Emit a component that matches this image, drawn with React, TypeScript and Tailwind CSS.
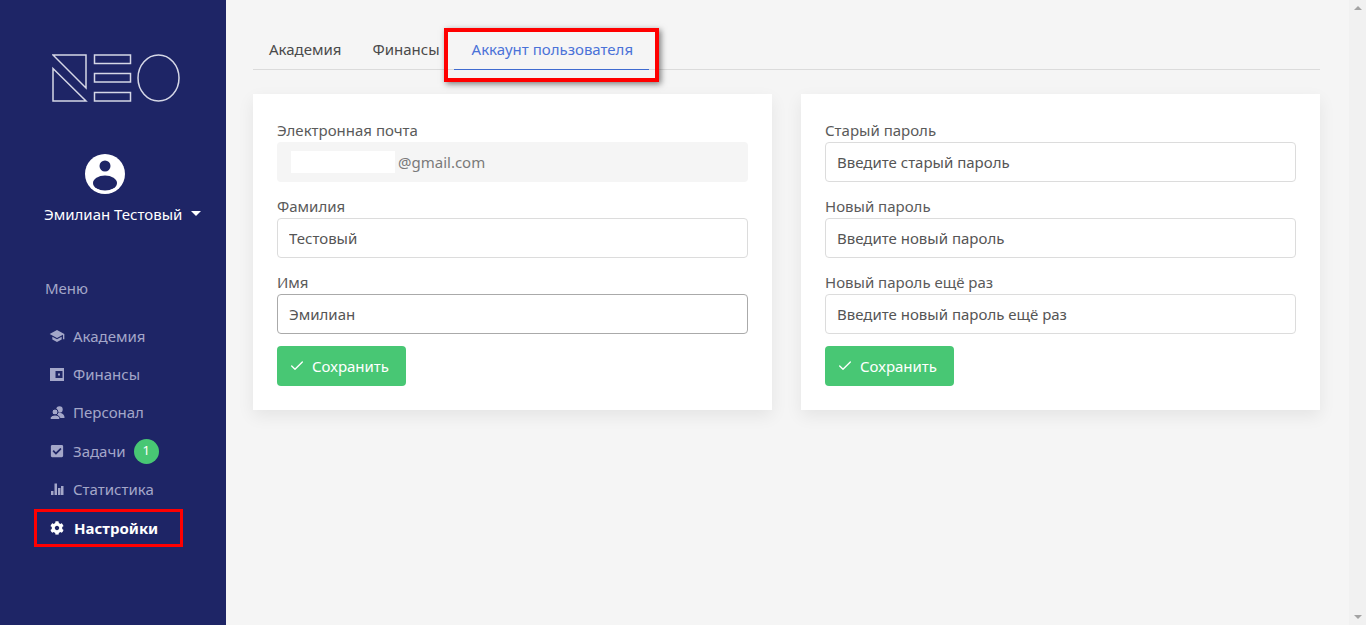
import React from 'react';
import { FaCheckSquare, FaCog } from 'react-icons/fa';
import { MdSchool } from 'react-icons/md';
import { Check } from 'lucide-react';

const menu = [
  { label: 'Академия', icon: <MdSchool className="w-[16px] h-[16px] ml-[-1px]" /> },
  { label: 'Финансы', icon: <WalletIcon /> },
  { label: 'Персонал', icon: <PeopleIcon /> },
  { label: 'Задачи', icon: <FaCheckSquare className="w-[14px] h-[14px]" />, badge: '1' },
  { label: 'Статистика', icon: <StatsIcon /> },
];

function WalletIcon() {
  return (
    <svg viewBox="0 0 14 13" className="w-[14px] h-[13px]" fill="currentColor">
      <path fillRule="evenodd" d="M0 0h14v13H0zM5.500 3v7h7V3zM8 5.500h2v2H8z" />
    </svg>
  );
}

function PeopleIcon() {
  return (
    <svg viewBox="0 0 15 14" className="w-[15px] h-[14px]">
      <circle cx="9.500" cy="3.500" r="3.200" fill="currentColor" />
      <path d="M4.500 12c0-3.500 2-5 5-5s5 1.500 5 5z" fill="currentColor" />
      <circle cx="5" cy="6" r="3" fill="currentColor" stroke="#1e2566" strokeWidth="1" />
      <path d="M0 13.500c0-3 2-4.500 5-4.500s5 1.500 5 4.500z" fill="currentColor" stroke="#1e2566" strokeWidth="1" />
    </svg>
  );
}

function StatsIcon() {
  return (
    <svg viewBox="0 0 14 14" className="w-[14px] h-[14px]" fill="currentColor">
      <path d="M1 9h2.500v4H1zM4.500 1.500H7V13H4.500zM8 6h2.500v7H8zM11 4h2.500v9H11z" />
    </svg>
  );
}

function AvatarIcon() {
  return (
    <svg viewBox="0 0 40 40" className="w-[40px] h-[40px]">
      <circle cx="20" cy="20" r="20" fill="#ffffff" />
      <circle cx="20" cy="12" r="5.500" fill="#1e2566" />
      <ellipse cx="20" cy="29" rx="12" ry="7.500" fill="#1e2566" />
    </svg>
  );
}

function NeoLogo() {
  return (
    <svg viewBox="0 0 128 48" className="w-[128px] h-[48px]" fill="none" stroke="#d5d7e6" strokeWidth="1.500">
      <path d="M1 1h33v33z" />
      <path d="M1 14.500v32.500h33z" />
      <rect x="42.500" y="1" width="36" height="8.500" />
      <rect x="42.500" y="19.500" width="36" height="8.500" />
      <rect x="42.500" y="38.500" width="36" height="8.500" />
      <ellipse cx="106.500" cy="24" rx="20.500" ry="23" />
    </svg>
  );
}

function Field({ label, value, focused }: { label: string; value: string; focused?: boolean }) {
  return (
    <div>
      <div className="text-[15px] leading-[22px] text-[#5a5a5a]">{label}</div>
      <input
        readOnly
        value={value}
        className={`mt-[1px] block w-full h-10 pl-[11px] pr-3 bg-white rounded border text-[15px] text-[#555555] outline-none ${
          focused ? 'border-[#aaaaaa]' : 'border-[#dcdcdc]'
        }`}
      />
    </div>
  );
}

function SaveButton() {
  return (
    <button className="mt-3 flex items-center gap-[7px] h-10 w-[129px] pl-[12px] rounded bg-[#48c774] text-white text-[15px]">
      <Check className="w-[16px] h-[16px]" strokeWidth={2} />
      Сохранить
    </button>
  );
}

export default function App() {
  return (
    <div className="flex h-[625px] overflow-hidden bg-[#f5f5f5] font-['Noto_Sans','Open_Sans',sans-serif]">
      <aside className="w-[226px] shrink-0 bg-[#1e2566] text-white">
        <div className="pt-[54px] pl-[52px]">
          <NeoLogo />
        </div>
        <div className="mt-[52px]">
          <div className="pl-[85px]">
            <AvatarIcon />
          </div>
          <div className="mt-[9px] pl-[44px] flex items-center gap-[9px] text-[15px] leading-[22px]">
            Эмилиан Тестовый
            <span className="mt-[-2px] border-x-[5px] border-t-[5px] border-x-transparent border-t-white" />
          </div>
        </div>
        <div className="mt-[52px] pl-[45px] text-[15px] leading-[22px] text-[#a4a7c9]">Меню</div>
        <nav className="mt-[18px]">
          {menu.map((item) => (
            <div key={item.label} className="flex items-center h-[38.300px] pl-[50px] text-[15px] text-[#a4a7c9]">
              <span className="w-[23px] shrink-0">{item.icon}</span>
              {item.label}
              {item.badge && (
                <span className="ml-[8px] flex items-center justify-center w-[25px] h-[25px] rounded-full bg-[#48c774] text-white text-[13px]">
                  {item.badge}
                </span>
              )}
            </div>
          ))}
          <div className="relative mt-[1px] flex items-center h-[38px] pl-[50px] text-[15px] font-bold text-white">
            <span className="w-[24px] shrink-0">
              <FaCog className="w-[14px] h-[14px]" />
            </span>
            Настройки
            <span className="absolute left-[34px] top-0 w-[149px] h-[38px] border-[3px] border-[#ff0000]" />
          </div>
        </nav>
      </aside>

      <main className="flex-1 min-w-0 pl-[27px] pr-[29px]">
        <div className="mt-[30px] h-[40px] flex border-b border-[#dbdbdb] text-[15px]">
          <div className="px-4 pt-[8px] text-[#4a4a4a]">Академия</div>
          <div className="pt-[8px] text-[#4a4a4a] ml-[15px]">Финансы</div>
          <div className="relative ml-[14px] w-[195px] h-[40px] pl-[18px] pt-[8px] text-[#4a72d8] border-b border-[#3f6bd0]">
            Аккаунт пользователя
            <span className="absolute left-[-10px] top-[-2px] w-[215px] h-[54px] border-[4px] border-[#ff0000] shadow-[2px_2px_6px_rgba(0,0,0,0.5)]" />
          </div>
        </div>
        <div className="mt-[24px] grid grid-cols-2 gap-[29px]">
          <section className="h-[316px] bg-white p-6 shadow-[0_6px_16px_rgba(0,0,0,0.07)]">
            <div className="mt-[1px] flex flex-col gap-[13px]">
              <div>
                <div className="text-[15px] leading-[22px] text-[#5a5a5a]">Электронная почта</div>
                <div className="mt-[1px] flex items-center h-10 pl-[14px] rounded bg-[#f5f5f5] text-[15px] text-[#7a7a7a]">
                  <span className="w-[104px] h-[22px] mr-[3px] bg-white" />
                  @gmail.com
                </div>
              </div>
              <Field label="Фамилия" value="Тестовый" />
              <Field label="Имя" value="Эмилиан" focused />
            </div>
            <SaveButton />
          </section>
          <section className="h-[316px] bg-white p-6 shadow-[0_6px_16px_rgba(0,0,0,0.07)]">
            <div className="mt-[1px] flex flex-col gap-[13px]">
              <Field label="Старый пароль" value="Введите старый пароль" />
              <Field label="Новый пароль" value="Введите новый пароль" />
              <Field label="Новый пароль ещё раз" value="Введите новый пароль ещё раз" />
            </div>
            <SaveButton />
          </section>
        </div>
      </main>

      <div className="w-[17px] shrink-0 bg-[#f1f1f1] flex flex-col items-center justify-between py-[6px]">
        <span className="border-x-[4px] border-b-[4px] border-x-transparent border-b-[#a3a3a3]" />
        <span className="border-x-[4px] border-t-[4px] border-x-transparent border-t-[#a3a3a3]" />
      </div>
    </div>
  );
}
